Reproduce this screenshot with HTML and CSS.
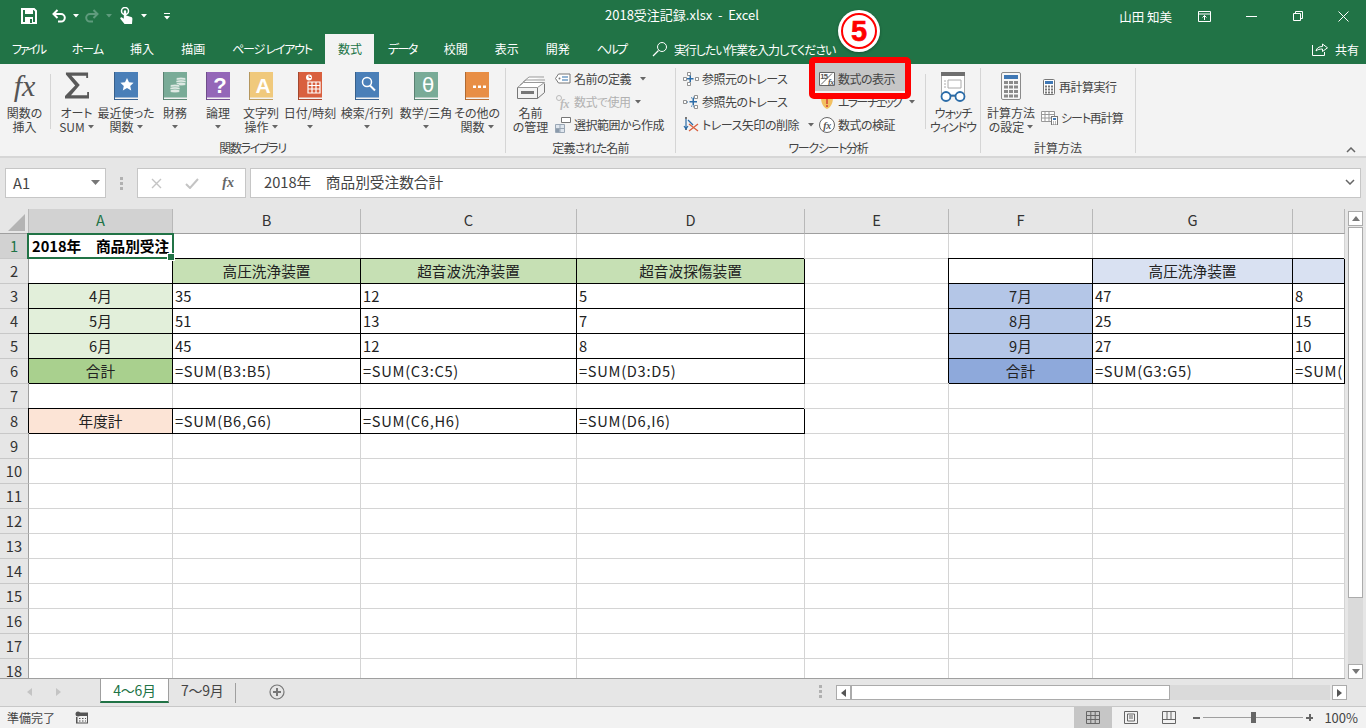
FILE: index.html
```html
<!DOCTYPE html>
<html lang="ja">
<head>
    <meta charset="UTF-8">
    <title>2018受注記録.xlsx - Excel</title>
    <link rel="stylesheet" href="styles.css">
</head>
<body>
    <svg class="defs" width="0" height="0">
        <symbol id="book" viewBox="0 0 24 28">
            <rect x="1" width="23" height="25.500" fill="currentColor"/>
            <rect width="1" height="28" fill="currentColor"/>
            <rect width="1" height="28" fill="#000" opacity=".25"/>
            <rect x="1" y="27" width="23" height="1" fill="currentColor"/>
            <rect x="1" y="27" width="23" height="1" fill="#000" opacity=".2"/>
        </symbol>
        <symbol id="caret" viewBox="0 0 6 4"><path d="M0 0h6L3 3.500z" fill="currentColor"/></symbol>
    </svg>

    <header class="titlebar">
        <div class="qat">
            <svg class="qat-save" width="16" height="16" viewBox="0 0 16 16"><path d="M1 1h12l2 2v12H1z" fill="none" stroke="#fff" stroke-width="2"/><rect x="4" y="1" width="8" height="5" fill="#fff"/><rect x="4" y="9" width="8" height="6" fill="#fff"/><rect x="9" y="11" width="2" height="4" fill="#217346"/></svg>
            <svg class="qat-undo" width="16" height="16" viewBox="0 0 16 16"><path d="M3 6h7a3.800 3.800 0 0 1 0 7.600H7M6.500 2 2.500 6l4 4" fill="none" stroke="#fff" stroke-width="2"/></svg>
            <svg class="qat-drop" width="6" height="4"><use href="#caret"/></svg>
            <svg class="qat-redo" width="16" height="16" viewBox="0 0 16 16"><path d="M13 6H6a3.800 3.800 0 0 0 0 7.600h3M9.500 2l4 4-4 4" fill="none" stroke="#5f9b7d" stroke-width="2"/></svg>
            <svg class="qat-drop off" width="6" height="4"><use href="#caret"/></svg>
            <svg class="qat-touch" width="16" height="18" viewBox="0 0 16 18"><circle cx="6" cy="4" r="3.500" fill="none" stroke="#fff" stroke-width="1.500"/><path d="M4.800 4.500a1.200 1.200 0 0 1 2.400 0v4l5 1.500c1 .3 1.200 1 1.200 2l-.4 5H5.500L1.500 12c-.8-1 .4-2.500 1.500-1.500l1.800 1.300z" fill="#fff"/></svg>
            <svg class="qat-drop" width="6" height="4"><use href="#caret"/></svg>
            <svg class="qat-more" width="8" height="7" viewBox="0 0 8 7"><path d="M1 0h6v1H1zM1 3h6L4 6.500z" fill="#fff"/></svg>
        </div>
        <div class="doc-title">2018受注記録.xlsx&nbsp; - &nbsp;Excel</div>
        <div class="user-name">山田 知美</div>
        <div class="window-btns">
            <svg width="13" height="11" viewBox="0 0 13 11"><path d="M.5.500h12v10H.500zM.5 3h12M6.500 9V4.500M4.500 6.500l2-2 2 2" fill="none" stroke="#fff"/></svg>
            <svg width="11" height="1" viewBox="0 0 11 1"><path d="M0 .5h11" stroke="#fff"/></svg>
            <svg width="10" height="10" viewBox="0 0 10 10"><path d="M.5 2.500h7v7h-7zM2.500 2.500v-2h7v7h-2" fill="none" stroke="#fff"/></svg>
            <svg width="11" height="11" viewBox="0 0 11 11"><path d="M.5.500l10 10M10.500.5l-10 10" stroke="#fff"/></svg>
        </div>
    </header>

    <nav class="tabs">
        <span class="tab kana-file">ファイル</span>
        <span class="tab kana-home">ホーム</span>
        <span class="tab">挿入</span>
        <span class="tab">描画</span>
        <span class="tab kana-page">ページ&nbsp;レイアウト</span>
        <span class="tab active">数式</span>
        <span class="tab kana">データ</span>
        <span class="tab">校閲</span>
        <span class="tab">表示</span>
        <span class="tab">開発</span>
        <span class="tab kana">ヘルプ</span>
        <span class="tell-me">
            <svg width="16" height="16" viewBox="0 0 16 16"><circle cx="10" cy="6" r="4.500" fill="none" stroke="#fff"/><path d="M6.500 9.500 1 15" stroke="#fff" stroke-width="1.300"/></svg>
            <span class="tell-text">実行したい作業を入力してください</span>
        </span>
        <span class="share">
            <svg width="16" height="14" viewBox="0 0 16 14"><path d="M.5 3v10.500h12V10M4 9c.5-3 3-4.500 6.500-4.500V2l5 3.800-5 3.700V7C8 7 5.500 7.500 4 9z" fill="none" stroke="#fff"/></svg>
            共有
        </span>
    </nav>

    <section class="ribbon">
        <div class="group g-func">
            <div class="group-body">
                <div class="big b-fx">
                    <div class="big-icon"><span class="fx-mark">fx</span></div>
                    <span>関数の</span><span>挿入</span>
                </div>
                <div class="inner-sep"></div>
                <div class="big b-sum">
                    <div class="big-icon"><svg width="24" height="27" viewBox="0 0 26 28"><path d="M1 0h24v6h-2V3.500H7l9 10-9.500 11H24V21h2v7H0v-2.500L11 14 1 2z" fill="#595959"/></svg></div>
                    <span>オート</span><span>SUM <svg class="drop" width="6" height="4"><use href="#caret"/></svg></span>
                </div>
                <div class="big b-recent">
                    <div class="big-icon"><svg class="book blue" width="24" height="28"><use href="#book"/><path d="M13 6l2 4.300 4.600.5-3.400 3.100 1 4.600-4.200-2.400-4.200 2.400 1-4.600L6.400 10.800l4.600-.5z" fill="#fff"/></svg></div>
                    <span>最近使った</span><span>関数 <svg class="drop" width="6" height="4"><use href="#caret"/></svg></span>
                </div>
                <div class="big b-fin">
                    <div class="big-icon"><svg class="book teal" width="24" height="28"><use href="#book"/><g fill="#dfe9e4" stroke="#79ab97" stroke-width=".6"><ellipse cx="18" cy="7" rx="5" ry="1.800"/><ellipse cx="18" cy="9.500" rx="5" ry="1.800"/><ellipse cx="18" cy="12" rx="5" ry="1.800"/><ellipse cx="12" cy="14" rx="5" ry="1.800"/><ellipse cx="12" cy="16.500" rx="5" ry="1.800"/><ellipse cx="12" cy="19" rx="5" ry="1.800"/></g></svg></div>
                    <span>財務</span><span><svg class="drop" width="6" height="4"><use href="#caret"/></svg></span>
                </div>
                <div class="big b-logic">
                    <div class="big-icon"><svg class="book purple" width="24" height="28"><use href="#book"/><text x="14" y="21" class="book-letter" font-size="22">?</text></svg></div>
                    <span>論理</span><span><svg class="drop" width="6" height="4"><use href="#caret"/></svg></span>
                </div>
                <div class="big b-text">
                    <div class="big-icon"><svg class="book yellow" width="24" height="28"><use href="#book"/><text x="14" y="21" class="book-letter" font-size="21">A</text></svg></div>
                    <span>文字列</span><span>操作 <svg class="drop" width="6" height="4"><use href="#caret"/></svg></span>
                </div>
                <div class="big b-date">
                    <div class="big-icon"><svg class="book red" width="24" height="28"><use href="#book"/><circle cx="11" cy="5.500" r="3" fill="#fff"/><path d="M11 3.500v2h2" stroke="#d9603f" fill="none"/><path d="M10 10h12v11H10zM10 13.500h12M10 17h12M14 10v11M18 10v11" fill="none" stroke="#fff" stroke-width="1.200"/></svg></div>
                    <span>日付/時刻</span><span><svg class="drop" width="6" height="4"><use href="#caret"/></svg></span>
                </div>
                <div class="big b-look">
                    <div class="big-icon"><svg class="book blue" width="24" height="28"><use href="#book"/><circle cx="12" cy="10" r="4.500" fill="none" stroke="#fff" stroke-width="1.500"/><path d="M15 13.500l5 5" stroke="#fff" stroke-width="2"/></svg></div>
                    <span>検索/行列</span><span><svg class="drop" width="6" height="4"><use href="#caret"/></svg></span>
                </div>
                <div class="big b-math">
                    <div class="big-icon"><svg class="book teal" width="24" height="28"><use href="#book"/><text x="14" y="20" class="book-letter thin" font-size="20">θ</text></svg></div>
                    <span>数学/三角</span><span><svg class="drop" width="6" height="4"><use href="#caret"/></svg></span>
                </div>
                <div class="big b-other">
                    <div class="big-icon"><svg class="book orange" width="24" height="28"><use href="#book"/><path d="M8 13.500h3v2.500H8zM13 13.500h3v2.500h-3zM18 13.500h3v2.500h-3z" fill="#fff"/></svg></div>
                    <span>その他の</span><span>関数 <svg class="drop" width="6" height="4"><use href="#caret"/></svg></span>
                </div>
            </div>
            <div class="group-label tight-l">関数ライブラリ</div>
        </div>

        <div class="group g-name">
            <div class="group-body">
                <div class="big b-manager">
                    <div class="big-icon"><svg width="30" height="24" viewBox="0 0 30 24"><path d="M1.500 11.500h20v11h-20zM21.500 22.500l7-6v-9" fill="#f3f3f3" stroke="#777"/><path d="M1.500 11.500l6-5h21l-7 5zM4 9l6-5h19M7 6l6-5h15" fill="#fff" stroke="#999"/><rect x="5" y="15" width="13" height="3" fill="#777"/></svg></div>
                    <span>名前</span><span>の管理</span>
                </div>
                <div class="small-col">
                    <div class="small"><svg width="16" height="12" viewBox="0 0 16 12"><path d="M3.500 1H15v9H3.500L.5 5.500z" fill="#fff" stroke="#777"/><circle cx="4.500" cy="5.500" r="1" fill="#777"/><path d="M7 4h6M7 7h6" stroke="#2b6ca8"/></svg>名前の定義<svg class="drop after" width="6" height="4"><use href="#caret"/></svg></div>
                    <div class="small off"><svg width="16" height="16" viewBox="0 0 16 16"><circle cx="4" cy="4" r="2.500" fill="none" stroke="#bbb"/><text x="5" y="14" class="fx-small off-fx" font-size="12">fx</text></svg>数式で使用<svg class="drop near" width="6" height="4"><use href="#caret"/></svg></div>
                    <div class="small"><svg width="16" height="16" viewBox="0 0 16 16"><path d="M.5 7.500h9v8h-9z" fill="#dfe6ee" stroke="#9aa7b5"/><path d="M.5 11.500h9M5 7.500v8" stroke="#9aa7b5"/><rect x="1" y="12" width="3.500" height="3" fill="#8a9aab"/><path d="M6.500.5h9v5h-9z" fill="#fff" stroke="#777"/></svg>選択範囲から作成</div>
                </div>
            </div>
            <div class="group-label tight-s">定義された名前</div>
        </div>

        <div class="group g-audit">
            <div class="group-body">
                <div class="small-col col-trace">
                    <div class="small"><svg width="16" height="14" viewBox="0 0 16 14"><path d="M4.500.5h3v3h-3zM.5 5.500h3v3h-3zM12.500 5.500h3v3h-3zM4.500 10.500h3v3h-3z" fill="#fff" stroke="#777" stroke-width=".8"/><path d="M4 6h2.500V3.500H8V6h2.500v1.500H8V10H6.500V7.500H4z" fill="#2b6ca8"/></svg>参照元のトレース</div>
                    <div class="small"><svg width="16" height="14" viewBox="0 0 16 14"><path d="M.5 5.500h3v3h-3zM11.500.5h3v3h-3zM11.500 10.500h3v3h-3z" fill="#fff" stroke="#777" stroke-width=".8"/><path d="M4 7h2M8 3l3-1M8 11l3 1" stroke="#2b6ca8" stroke-dasharray="1 1"/><path d="M6.500 6h3V3H11v3h3v1.500h-3v3H9.500v-3h-3z" fill="#2b6ca8"/></svg>参照先のトレース</div>
                    <div class="small"><svg width="16" height="15" viewBox="0 0 16 15"><path d="M2 0h2v2H2zM2 11h2v2H2z" fill="#777"/><path d="M3 2v9M1 9l2 3 2-3" fill="none" stroke="#2b6ca8" stroke-width="1.200"/><path d="M5 3l5 5" stroke="#2b6ca8" stroke-width="1.200"/><path d="M6 7l9 7M15 7l-9 7" stroke="#d9603f" stroke-width="1.300"/></svg>トレース矢印の削除<svg class="drop after" width="6" height="4"><use href="#caret"/></svg></div>
                </div>
                <div class="small-col col-show">
                    <div class="small"><svg width="16" height="14" viewBox="0 0 16 14"><path d="M.5.500h15v13H.5z" fill="#fff" stroke="#666"/><path d="M2 12.500L13 1.500" stroke="#666"/><text x="1.200" y="7" class="num-small" font-size="7.500">15</text><text x="9" y="12.500" class="fx-small" font-size="8">fx</text></svg>数式の表示</div>
                    <div class="small"><svg width="16" height="14" viewBox="0 0 16 14"><path d="M2 2c3 0 5-1 6-2 1 1 3 2 6 2 0 6-2 10-6 12-4-2-6-6-6-12z" fill="#f2c061"/><path d="M7 3h2v6H7zM7 10h2v2H7z" fill="#d9603f"/></svg><span class="kana-tight">エラー&nbsp;チェック</span><svg class="drop err" width="6" height="4"><use href="#caret"/></svg></div>
                    <div class="small"><svg width="16" height="16" viewBox="0 0 16 16"><circle cx="8" cy="8" r="7.500" fill="#fff" stroke="#666"/><text x="8" y="11.500" class="fx-small mid" font-size="10">fx</text></svg>数式の検証</div>
                </div>
                <div class="inner-sep sep-watch"></div>
                <div class="big b-watch">
                    <div class="big-icon"><svg width="28" height="30" viewBox="0 0 28 30"><path d="M2.500.5h23v24h-23z" fill="#fff" stroke="#aaa"/><rect x="2" width="24" height="4" fill="#6e6e6e"/><path d="M9 8h13v8H9zM5 9h2M5 12h2M5 15h2" fill="none" stroke="#aaa"/><circle cx="7" cy="24.500" r="4.500" fill="#fff" stroke="#2b6ca8" stroke-width="1.800"/><circle cx="21" cy="24.500" r="4.500" fill="#fff" stroke="#2b6ca8" stroke-width="1.800"/><path d="M11 23.500h6" stroke="#2b6ca8" stroke-width="1.800"/></svg></div>
                    <span class="kana-watch">ウォッチ</span><span class="kana-watch">ウィンドウ</span>
                </div>
            </div>
            <div class="group-label tight-l">ワークシート分析</div>
        </div>

        <div class="group g-calc">
            <div class="group-body">
                <div class="big b-calc">
                    <div class="big-icon"><svg width="20" height="28" viewBox="0 0 20 28"><rect x=".5" y=".5" width="19" height="27" rx="1.500" fill="#f7f7f7" stroke="#8a8a8a"/><rect x="3" y="3" width="14" height="4" fill="#3f78b5"/><path d="M3 9h4v3H3zM8 9h4v3H8zM13 9h4v3h-4zM3 13.500h4v3H3zM8 13.500h4v3H8zM13 13.500h4v3h-4zM3 18h4v3H3zM8 18h4v3H8zM13 18h4v3h-4zM3 22.500h4v3H3zM8 22.500h4v3H8zM13 22.500h4v3h-4z" fill="#8a8a8a"/></svg></div>
                    <span>計算方法</span><span>の設定 <svg class="drop" width="6" height="4"><use href="#caret"/></svg></span>
                </div>
                <div class="small-col col-recalc">
                    <div class="small"><svg class="icon-calc" width="12" height="16" viewBox="0 0 12 16"><rect x=".5" y=".5" width="11" height="15" rx="1" fill="#fff" stroke="#777"/><rect x="2" y="2" width="8" height="3" fill="#3f78b5"/><path d="M2 6.500h2v2H2zM5 6.500h2v2H5zM8 6.500h2v2H8zM2 9.500h2v2H2zM5 9.500h2v2H5zM8 9.500h2v2H8zM2 12.500h2v2H2zM5 12.500h2v2H5zM8 12.500h2v2H8z" fill="#777"/></svg>再計算実行</div>
                    <div class="small"><svg width="17" height="14" viewBox="0 0 17 14"><path d="M.5.500h13v10H.5zM.5 3.500h13M.5 7h13M4 .5v10M8 .5v10" fill="#fff" stroke="#999"/><rect x="10.500" y="5.500" width="6" height="8.500" fill="#fff" stroke="#777"/><rect x="12" y="7" width="3" height="2" fill="#3f78b5"/><path d="M12 10.500h1v1h-1zM14 10.500h1v1h-1zM12 12.500h1v1h-1zM14 12.500h1v1h-1z" fill="#777"/></svg><span class="kana-sheet">シート再計算</span></div>
                </div>
            </div>
            <div class="group-label">計算方法</div>
        </div>
        <svg class="collapse" width="10" height="6" viewBox="0 0 10 6"><path d="M1 5l4-4 4 4" fill="none" stroke="#666" stroke-width="1.500"/></svg>
    </section>

    <section class="formula-bar">
        <div class="name-box">A1<svg class="name-caret" width="9" height="5"><path d="M0 0h9L4.500 5z" fill="#777"/></svg></div>
        <div class="fb-dots"><i></i><i></i><i></i></div>
        <div class="fb-btns">
            <svg width="11" height="11" viewBox="0 0 11 11"><path d="M1 1l9 9M10 1l-9 9" stroke="#c4c4c4" stroke-width="1.400"/></svg>
            <svg width="14" height="11" viewBox="0 0 14 11"><path d="M1 6l4 4 8-9" fill="none" stroke="#c4c4c4" stroke-width="2"/></svg>
            <span class="fb-fx">fx</span>
        </div>
        <div class="fb-input">2018年　商品別受注数合計
            <svg class="fb-chevron" width="10" height="6" viewBox="0 0 10 6"><path d="M1 1l4 4 4-4" fill="none" stroke="#666" stroke-width="1.500"/></svg>
        </div>
    </section>

    <main class="sheet-area">
        <div class="sheet-clip">
            <table class="sheet">
                <colgroup>
                    <col class="c-head"><col class="c-a"><col class="c-b"><col class="c-c"><col class="c-d"><col class="c-e"><col class="c-f"><col class="c-g"><col class="c-h">
                </colgroup>
                <thead>
                    <tr><th class="corner"><span class="corner-mark"></span></th><th class="cur">A</th><th>B</th><th>C</th><th>D</th><th>E</th><th>F</th><th>G</th><th></th></tr>
                </thead>
                <tbody>
                    <tr><th class="cur">1</th><td class="sel"><b>2018年　商品別受注</b></td><td></td><td></td><td></td><td></td><td></td><td></td><td></td></tr>
                    <tr><th>2</th><td></td><td class="k ctr head-green">高圧洗浄装置</td><td class="k ctr head-green">超音波洗浄装置</td><td class="k ctr head-green">超音波探傷装置</td><td></td><td class="k"></td><td class="k ctr head-blue">高圧洗浄装置</td><td class="k head-blue"></td></tr>
                    <tr><th>3</th><td class="k ctr pale-green">4月</td><td class="k">35</td><td class="k">12</td><td class="k">5</td><td></td><td class="k ctr pale-blue">7月</td><td class="k">47</td><td class="k">8</td></tr>
                    <tr><th>4</th><td class="k ctr pale-green">5月</td><td class="k">51</td><td class="k">13</td><td class="k">7</td><td></td><td class="k ctr pale-blue">8月</td><td class="k">25</td><td class="k">15</td></tr>
                    <tr><th>5</th><td class="k ctr pale-green">6月</td><td class="k">45</td><td class="k">12</td><td class="k">8</td><td></td><td class="k ctr pale-blue">9月</td><td class="k">27</td><td class="k">10</td></tr>
                    <tr><th>6</th><td class="k ctr deep-green">合計</td><td class="k fm">=SUM(B3:B5)</td><td class="k fm">=SUM(C3:C5)</td><td class="k fm">=SUM(D3:D5)</td><td></td><td class="k ctr deep-blue">合計</td><td class="k fm">=SUM(G3:G5)</td><td class="k fm">=SUM(H3:H5)</td></tr>
                    <tr><th>7</th><td></td><td></td><td></td><td></td><td></td><td></td><td></td><td></td></tr>
                    <tr><th>8</th><td class="k ctr peach">年度計</td><td class="k fm">=SUM(B6,G6)</td><td class="k fm">=SUM(C6,H6)</td><td class="k fm">=SUM(D6,I6)</td><td></td><td></td><td></td><td></td></tr>
                    <tr><th>9</th><td></td><td></td><td></td><td></td><td></td><td></td><td></td><td></td></tr>
                    <tr><th>10</th><td></td><td></td><td></td><td></td><td></td><td></td><td></td><td></td></tr>
                    <tr><th>11</th><td></td><td></td><td></td><td></td><td></td><td></td><td></td><td></td></tr>
                    <tr><th>12</th><td></td><td></td><td></td><td></td><td></td><td></td><td></td><td></td></tr>
                    <tr><th>13</th><td></td><td></td><td></td><td></td><td></td><td></td><td></td><td></td></tr>
                    <tr><th>14</th><td></td><td></td><td></td><td></td><td></td><td></td><td></td><td></td></tr>
                    <tr><th>15</th><td></td><td></td><td></td><td></td><td></td><td></td><td></td><td></td></tr>
                    <tr><th>16</th><td></td><td></td><td></td><td></td><td></td><td></td><td></td><td></td></tr>
                    <tr><th>17</th><td></td><td></td><td></td><td></td><td></td><td></td><td></td><td></td></tr>
                    <tr><th>18</th><td></td><td></td><td></td><td></td><td></td><td></td><td></td><td></td></tr>
                </tbody>
            </table>
        </div>
        <div class="vscroll">
            <div class="sb-btn"><svg width="8" height="5"><path d="M0 5h8L4 0z" fill="#777"/></svg></div>
            <div class="sb-thumb"></div>
            <div class="sb-track"></div>
            <div class="sb-btn"><svg width="8" height="5"><path d="M0 0h8L4 5z" fill="#777"/></svg></div>
        </div>
    </main>

    <section class="sheet-tabs">
        <div class="tab-nav">
            <svg width="5" height="8"><path d="M5 0v8L0 4z" fill="#c4c4c4"/></svg>
            <svg width="5" height="8"><path d="M0 0v8l5-4z" fill="#c4c4c4"/></svg>
        </div>
        <div class="sheet-tab active">4～6月</div>
        <div class="sheet-tab">7～9月</div>
        <svg class="add-sheet" width="16" height="16" viewBox="0 0 16 16"><circle cx="8" cy="8" r="7" fill="none" stroke="#777" stroke-width="1.200"/><path d="M8 4v8M4 8h8" stroke="#777" stroke-width="2"/></svg>
        <div class="hs-dots"><i></i><i></i><i></i></div>
        <div class="hscroll">
            <div class="sb-btn"><svg width="5" height="8"><path d="M5 0v8L0 4z" fill="#555"/></svg></div>
            <div class="hs-thumb"></div>
            <div class="hs-track"></div>
            <div class="sb-btn"><svg width="5" height="8"><path d="M0 0v8l5-4z" fill="#555"/></svg></div>
        </div>
    </section>

    <footer class="statusbar">
        <span class="ready">準備完了</span>
        <svg class="macro" width="13" height="13" viewBox="0 0 13 13"><circle cx="3" cy="3" r="2.500" fill="#555"/><path d="M5 1.500h8v11H1V6h1.500v5.500H12V5H5z" fill="#555"/><path d="M4 7h1.500v1H4zM7 7h1.500v1H7zM10 7h1v1h-1zM4 9.500h1.500v1H4zM7 9.500h1.500v1H7zM10 9.500h1v1h-1z" fill="#555"/></svg>
        <div class="views">
            <span class="view on"><svg width="14" height="13" viewBox="0 0 14 13"><path d="M.5.500h13v12H.500zM.5 4.500h13M.5 8.500h13M4.800.5v12M9.200.5v12" fill="none" stroke="#666"/></svg></span>
            <span class="view"><svg width="14" height="13" viewBox="0 0 14 13"><path d="M.5.500h13v12H.500z" fill="none" stroke="#666"/><path d="M3.500 3h7v7h-7zM5 5h4M5 7h4" fill="none" stroke="#666"/></svg></span>
            <span class="view"><svg width="14" height="13" viewBox="0 0 14 13"><path d="M.5.500h13v12H.500zM.5 8.500h13M5 .5v8M9 .5v8" fill="none" stroke="#666"/></svg></span>
        </div>
        <div class="zoom">
            <span class="zoom-sign minus"></span>
            <div class="zoom-track"><span class="zoom-thumb"></span></div>
            <span class="zoom-sign plus"></span>
            <span class="zoom-value">100%</span>
        </div>
    </footer>

    <div class="mark-box"></div>
    <div class="mark-num"><span>5</span></div>
</body>
</html>
```

FILE: styles.css
```css
* {
    box-sizing: border-box;
}
html, body {
    margin: 0;
    padding: 0;
}
body {
    position: relative;
    width: 1366px;
    height: 728px;
    overflow: hidden;
    display: flex;
    flex-direction: column;
    font-family: "Noto Sans CJK JP", "Noto Sans", sans-serif;
    font-feature-settings: "palt";
    font-size: 12px;
    color: #444;
    background: #e6e6e6;
}
svg {
    display: block;
    flex: none;
}
.defs {
    position: absolute;
}

/* title bar */
.titlebar {
    position: relative;
    height: 32px;
    flex: none;
    background: #217346;
    color: #fff;
    display: flex;
    align-items: center;
}
.qat {
    display: flex;
    align-items: center;
    padding-left: 21px;
    color: #fff;
}
.qat-undo {
    margin-left: 14px;
}
.qat-drop {
    margin-left: 6px;
}
.qat-drop.off {
    color: #5f9b7d;
}
.qat-redo {
    margin-left: 5px;
}
.qat-touch {
    margin-left: 7px;
}
.qat-more {
    margin-left: 16px;
}
.doc-title {
    position: absolute;
    left: 605px;
    top: 6px;
    font-size: 13px;
    line-height: 18px;
    white-space: nowrap;
}
.user-name {
    margin-left: auto;
    margin-right: 26px;
    font-size: 12.500px;
}
.window-btns {
    display: flex;
    align-items: center;
    width: 168px;
    justify-content: space-between;
    padding-right: 17px;
}

/* tabs */
.tabs {
    height: 32px;
    flex: none;
    background: #217346;
    color: #fff;
    display: flex;
    align-items: flex-end;
}
.tab {
    height: 30px;
    padding: 0 13.500px;
    line-height: 29px;
    white-space: nowrap;
}
.tab.kana {
    letter-spacing: -1.600px;
}
.tab.kana-file {
    letter-spacing: -2.200px;
    margin-left: -1.500px;
}
.tab.kana-home {
    letter-spacing: -1px;
}
.tab.kana-page {
    letter-spacing: -1.200px;
}
.tab.active {
    padding: 0 12.500px;
    background: #f3f3f3;
    color: #217346;
}
.tell-me {
    display: flex;
    align-items: center;
    gap: 6px;
    height: 30px;
    margin-left: 12px;
}
.tell-text {
    letter-spacing: -1.100px;
}
.share {
    display: flex;
    align-items: center;
    gap: 7px;
    height: 30px;
    margin-left: auto;
    padding-right: 7px;
}

/* ribbon */
.ribbon {
    position: relative;
    height: 94px;
    flex: none;
    background: #f3f3f3;
    border-bottom: 2px solid #d6d6d6;
    display: flex;
    padding-top: 4px;
}
.group {
    display: flex;
    flex-direction: column;
    border-right: 1px solid #d5d5d5;
    margin-bottom: 3px;
}
.group-body {
    height: 73px;
    flex: none;
    padding-top: 4px;
    display: flex;
}
.group-label {
    height: 12px;
    flex: none;
    line-height: 14px;
    text-align: center;
    white-space: nowrap;
}
.group-label.tight-l {
    letter-spacing: -1.300px;
}
.group-label.tight-s {
    letter-spacing: -.800px;
}
.g-func {
    width: 506px;
}
.g-name {
    width: 170px;
}
.g-audit {
    width: 305px;
}
.g-calc {
    width: 155px;
}
.big {
    display: flex;
    flex-direction: column;
    align-items: center;
    flex: none;
    line-height: 14px;
    white-space: nowrap;
}
.big > span {
    height: 14px;
    display: flex;
    align-items: center;
    gap: 3px;
}
.big-icon {
    height: 34px;
}
.drop {
    color: #666;
}
.drop.after {
    margin-left: 9px;
}
.drop.near {
    margin-left: 4px;
}
.drop.err {
    margin-left: 8px;
}
.inner-sep {
    width: 1px;
    height: 55px;
    margin-top: 2px;
    flex: none;
    background: #d5d5d5;
}
.fx-mark {
    display: block;
    font-family: "Liberation Serif", serif;
    font-style: italic;
    font-size: 30px;
    line-height: 28px;
    color: #555;
}
.b-fx { width: 49px; margin-right: 1px; }
.b-sum { width: 49px; padding-left: 2px; }
.b-recent { width: 52px; }
.b-fin { width: 46px; }
.b-logic { width: 40px; }
.b-text { width: 46px; }
.b-date { width: 52px; }
.b-look { width: 62px; }
.b-math { width: 56px; }
.b-other { width: 46px; }
.book.blue { color: #4a7fb8; }
.book.teal { color: #79ab97; }
.book.purple { color: #9467b8; }
.book.yellow { color: #f0c97c; }
.book.red { color: #d9603f; }
.book.orange { color: #e88e45; }
.book-letter {
    fill: #fff;
    font-family: "Liberation Sans", sans-serif;
    font-weight: bold;
    text-anchor: middle;
}
.book-letter.thin {
    font-family: "DejaVu Sans", sans-serif;
    font-weight: normal;
}
.fx-small {
    fill: #555;
    font-family: "Liberation Serif", serif;
    font-style: italic;
    font-weight: bold;
}
.num-small {
    fill: #555;
    font-family: "Liberation Sans", sans-serif;
    font-weight: bold;
}
.fx-small.mid {
    text-anchor: middle;
}
.fx-small.off-fx {
    fill: #bbb;
}
.b-manager {
    width: 49px;
}
.b-manager .big-icon {
    padding-top: 4px;
}
.small-col {
    margin-top: -5px;
    flex: none;
}
.small {
    height: 23px;
    display: flex;
    align-items: center;
    white-space: nowrap;
    letter-spacing: -.500px;
}
.small > svg:first-child {
    margin-right: 3px;
}
.small.off {
    color: #b1b1b1;
}
.kana-tight {
    letter-spacing: -1.800px;
}
.kana-sheet {
    letter-spacing: -1.100px;
}
.kana-watch {
    letter-spacing: -1px;
}
.col-trace {
    width: 136px;
    margin-left: 7px;
}
.col-show {
    width: 106px;
}
.col-show .small:first-child {
    background: #c6c6c6;
    box-shadow: 0 -6px 0 #c6c6c6, 0 1px 0 #c6c6c6;
    margin-left: -4px;
    padding-left: 4px;
    width: 92px;
}
.sep-watch {
    margin-top: 2px;
}
.b-watch {
    width: 54px;
}
.b-calc {
    width: 60px;
}
.col-recalc {
    margin-top: -1px;
}
.col-recalc .small {
    height: 31px;
}
.icon-calc {
    margin-left: 2px;
    margin-right: 4px !important;
}
.collapse {
    position: absolute;
    right: 10px;
    bottom: 3px;
}

/* formula bar */
.formula-bar {
    height: 51px;
    flex: none;
    padding: 10px 5px 11px;
    display: flex;
    align-items: stretch;
    background: #e6e6e6;
}
.name-box, .fb-btns, .fb-input {
    background: #fff;
    border: 1px solid #c6c6c6;
    font-size: 14.670px;
    font-feature-settings: normal;
    display: flex;
    align-items: center;
}
.name-box {
    width: 101px;
    padding: 0 5px 2px 7px;
    justify-content: space-between;
}
.fb-dots {
    width: 31px;
    display: flex;
    flex-direction: column;
    align-items: center;
    justify-content: center;
    gap: 2px;
}
.fb-dots i, .hs-dots i {
    width: 3px;
    height: 3px;
    background: #b1b1b1;
}
.fb-btns {
    width: 109px;
    padding: 0 11px 0 13px;
    justify-content: space-between;
    gap: 16px;
}
.fb-fx {
    font-family: "Liberation Serif", serif;
    font-style: italic;
    font-weight: bold;
    font-size: 14px;
    color: #666;
}
.fb-input {
    flex: 1;
    margin-left: 4px;
    padding: 0 5px 3px 13px;
    justify-content: space-between;
}

/* sheet */
.sheet-area {
    height: 470px;
    flex: none;
    display: flex;
    background: #e6e6e6;
}
.sheet-clip {
    width: 1345px;
    height: 470px;
    overflow: hidden;
    border-bottom: 1px solid #9f9f9f;
    background: #fff;
}
.sheet {
    table-layout: fixed;
    width: 1345px;
    border-collapse: separate;
    border-spacing: 0;
    font-size: 14.670px;
    line-height: 18px;
    font-feature-settings: normal;
    color: #222;
}
.c-head { width: 29px; }
.c-a { width: 144px; }
.c-b { width: 188px; }
.c-c { width: 216px; }
.c-d { width: 228px; }
.c-e { width: 144px; }
.c-f { width: 144px; }
.c-g { width: 200px; }
.c-h { width: 52px; }
.sheet th, .sheet td {
    height: 25px;
    padding: 0 0 1px;
    white-space: nowrap;
    overflow: hidden;
}
.sheet th {
    background: #e6e6e6;
    font-weight: normal;
    color: #333;
    text-align: center;
    border-right: 1px solid #b4b4b4;
    border-bottom: 1px solid #b4b4b4;
}
.sheet thead th {
    padding-bottom: 2px;
    border-bottom: 1px solid #9f9f9f;
    border-right-color: #b8b8b8;
}
.sheet tbody th {
    border-right-color: #9f9f9f;
    border-bottom-color: #c8c8c8;
}
.sheet th.cur {
    background: #d2d2d2;
    color: #217346;
}
.sheet td {
    background: #fff;
    padding-left: 2px;
    border-right: 1px solid #d4d4d4;
    border-bottom: 1px solid #d4d4d4;
}
.sheet td.k {
    border-right-color: #000;
    border-bottom-color: #000;
    box-shadow: -1px -1px 0 #000;
}
.sheet td.fm {
    letter-spacing: .700px;
}
.sheet td.ctr {
    text-align: center;
    padding-left: 0;
}
.sheet td.sel {
    position: relative;
    overflow: visible;
    padding-left: 3px;
    color: #000;
}
.sheet td.sel b {
    display: block;
    width: 141px;
    overflow: hidden;
}
.sheet td.sel::before {
    content: "";
    position: absolute;
    left: -2px;
    top: -1px;
    right: -2px;
    bottom: -1px;
    border: 2px solid #217346;
}
.sheet td.sel::after {
    content: "";
    position: absolute;
    right: -3px;
    bottom: -3px;
    width: 6px;
    height: 6px;
    background: #217346;
    border: 1px solid #fff;
}
.corner {
    position: relative;
}
.corner-mark {
    position: absolute;
    left: 8px;
    top: 5px;
    width: 0;
    height: 0;
    border-left: 17px solid transparent;
    border-bottom: 17px solid #b4b4b4;
}
.head-green { background: #c6e0b4 !important; }
.pale-green { background: #e2efda !important; }
.deep-green { background: #a9d08e !important; }
.head-blue { background: #d9e1f2 !important; }
.pale-blue { background: #b4c6e7 !important; }
.deep-blue { background: #8ea9db !important; }
.peach { background: #fce4d6 !important; }

/* scrollbars */
.vscroll {
    width: 21px;
    padding: 2px 3px 0;
    display: flex;
    flex-direction: column;
}
.sb-btn {
    width: 15px;
    height: 15px;
    flex: none;
    background: #fff;
    border: 1px solid #ababab;
    display: flex;
    align-items: center;
    justify-content: center;
}
.sb-thumb {
    height: 371px;
    flex: none;
    margin-top: 1px;
    background: #fff;
    border: 1px solid #ababab;
}
.sb-track {
    flex: 1;
    background: #dadada;
}

/* sheet tabs */
.sheet-tabs {
    position: relative;
    height: 27px;
    flex: none;
    display: flex;
    background: #e6e6e6;
    font-size: 14px;
}
.tab-nav {
    width: 100px;
    display: flex;
    align-items: center;
    justify-content: flex-start;
    gap: 24px;
    padding-left: 27px;
    padding-bottom: 2px;
}
.sheet-tab {
    height: 24px;
    padding: 0 13px 0 12px;
    line-height: 23px;
    color: #444;
    letter-spacing: -.300px;
}
.sheet-tab.active {
    width: 69px;
    background: #fff;
    color: #217346;
    border-left: 1px solid #9f9f9f;
    border-right: 1px solid #9f9f9f;
    border-bottom: 2px solid #217346;
    text-align: center;
    padding: 0;
}
.sheet-tab:not(.active)::after {
    content: "";
    position: absolute;
    left: 235px;
    top: 4px;
    width: 1px;
    height: 20px;
    background: #9f9f9f;
}
.add-sheet {
    margin: 5px 0 0 33px;
}
.hs-dots {
    position: absolute;
    left: 819px;
    top: 6px;
    display: flex;
    flex-direction: column;
    gap: 2px;
}
.hscroll {
    position: absolute;
    left: 836px;
    top: 6px;
    width: 511px;
    height: 15px;
    display: flex;
}
.hs-thumb {
    width: 319px;
    background: #fff;
    border: 1px solid #ababab;
}
.hs-track {
    flex: 1;
    background: #dadada;
    margin-right: 2px;
}

/* status bar */
.statusbar {
    height: 22px;
    flex: 1;
    background: #f2f2f2;
    border-top: 1px solid #c8c8c8;
    display: flex;
    align-items: center;
    padding-left: 7px;
}
.macro {
    margin-left: 20px;
}
.views {
    margin-left: auto;
    display: flex;
    height: 100%;
}
.view {
    width: 38px;
    display: flex;
    align-items: center;
    justify-content: center;
}
.view.on {
    background: #c6c6c6;
}
.zoom {
    display: flex;
    align-items: center;
    width: 178px;
    padding-left: 5px;
}
.zoom-sign {
    position: relative;
    width: 7px;
    height: 7px;
    flex: none;
}
.zoom-sign::before {
    content: "";
    position: absolute;
    left: 0;
    top: 2.500px;
    width: 7px;
    height: 2px;
    background: #666;
}
.zoom-sign.plus::after {
    content: "";
    position: absolute;
    left: 2.500px;
    top: 0;
    width: 2px;
    height: 7px;
    background: #666;
}
.zoom-track {
    position: relative;
    width: 100px;
    height: 1px;
    margin: 0 3px;
    background: #9f9f9f;
}
.zoom-thumb {
    position: absolute;
    left: 48px;
    top: -5px;
    width: 5px;
    height: 11px;
    background: #666;
}
.zoom-value {
    margin-left: auto;
    padding-right: 8px;
    font-size: 13px;
}

/* annotation */
.mark-box {
    position: absolute;
    left: 809px;
    top: 57px;
    width: 102px;
    height: 42px;
    border: 6px solid #f00;
    border-radius: 5px;
}
.mark-num {
    position: absolute;
    left: 838px;
    top: 10px;
    width: 42px;
    height: 42px;
    padding: 3px;
    border-radius: 50%;
    background: #fff;
    box-shadow: 0 1px 3px rgba(0, 0, 0, 0.3);
}
.mark-num span {
    display: block;
    width: 36px;
    height: 36px;
    border: 2px solid #f00;
    border-radius: 50%;
    color: #f00;
    font-family: "Liberation Sans", sans-serif;
    font-weight: bold;
    font-size: 29px;
    line-height: 32px;
    text-align: center;
    -webkit-text-stroke: .6px #f00;
}
```
